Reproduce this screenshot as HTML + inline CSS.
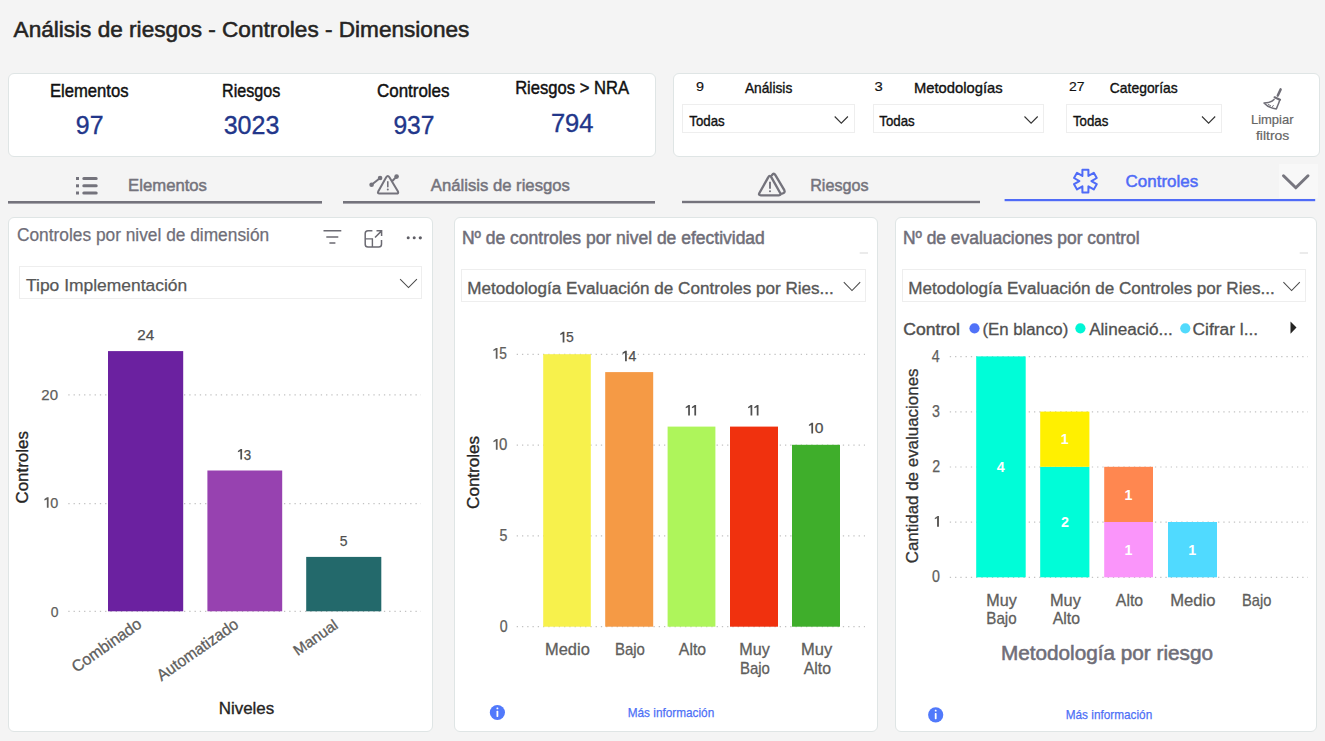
<!DOCTYPE html><html><head><meta charset="utf-8"><style>html,body{margin:0;padding:0;background:#f4f4f4;width:1325px;height:741px;overflow:hidden}svg{display:block;font-family:"Liberation Sans",sans-serif}</style></head><body><svg width="1325" height="741" viewBox="0 0 1325 741"><text x="13.58" y="36.70" font-size="22.80" font-weight="normal" fill="#252423" stroke="#252423" stroke-width="0.55" textLength="455.77" lengthAdjust="spacingAndGlyphs">Análisis de riesgos - Controles - Dimensiones</text>
<rect x="8.5" y="73.5" width="647" height="83" rx="5.5" ry="5.5" fill="#fff" stroke="#dfe5e5" stroke-width="1"/>
<text x="49.95" y="96.90" font-size="18.10" font-weight="normal" fill="#111111" stroke="#111111" stroke-width="0.45" textLength="78.59" lengthAdjust="spacingAndGlyphs">Elementos</text>
<text x="222.09" y="96.90" font-size="18.10" font-weight="normal" fill="#111111" stroke="#111111" stroke-width="0.45" textLength="58.22" lengthAdjust="spacingAndGlyphs">Riesgos</text>
<text x="377.01" y="96.90" font-size="18.10" font-weight="normal" fill="#111111" stroke="#111111" stroke-width="0.45" textLength="72.50" lengthAdjust="spacingAndGlyphs">Controles</text>
<text x="515.15" y="93.90" font-size="18.10" font-weight="normal" fill="#111111" stroke="#111111" stroke-width="0.45" textLength="113.85" lengthAdjust="spacingAndGlyphs">Riesgos &gt; NRA</text>
<text x="75.87" y="133.90" font-size="25.40" font-weight="normal" fill="#22368a" stroke="#22368a" stroke-width="0.35" textLength="27.65" lengthAdjust="spacingAndGlyphs">97</text>
<text x="223.69" y="133.90" font-size="25.40" font-weight="normal" fill="#22368a" stroke="#22368a" stroke-width="0.35" textLength="55.70" lengthAdjust="spacingAndGlyphs">3023</text>
<text x="393.38" y="133.90" font-size="25.40" font-weight="normal" fill="#22368a" stroke="#22368a" stroke-width="0.35" textLength="41.12" lengthAdjust="spacingAndGlyphs">937</text>
<text x="550.92" y="131.80" font-size="25.40" font-weight="normal" fill="#22368a" stroke="#22368a" stroke-width="0.35" textLength="42.63" lengthAdjust="spacingAndGlyphs">794</text>
<rect x="673.5" y="73.5" width="646" height="83" rx="5.5" ry="5.5" fill="#fff" stroke="#dfe5e5" stroke-width="1"/>
<text x="695.98" y="90.80" font-size="13.00" font-weight="normal" fill="#111111" stroke="#111111" stroke-width="0.15" textLength="8.01" lengthAdjust="spacingAndGlyphs">9</text>
<text x="744.88" y="93.10" font-size="14.20" font-weight="normal" fill="#111111" stroke="#111111" stroke-width="0.35" textLength="47.41" lengthAdjust="spacingAndGlyphs">Análisis</text>
<text x="874.50" y="90.80" font-size="13.00" font-weight="normal" fill="#111111" stroke="#111111" stroke-width="0.15" textLength="8.27" lengthAdjust="spacingAndGlyphs">3</text>
<text x="914.01" y="93.10" font-size="14.20" font-weight="normal" fill="#111111" stroke="#111111" stroke-width="0.35" textLength="88.60" lengthAdjust="spacingAndGlyphs">Metodologías</text>
<text x="1069.00" y="90.80" font-size="13.00" font-weight="normal" fill="#111111" stroke="#111111" stroke-width="0.15" textLength="15.55" lengthAdjust="spacingAndGlyphs">27</text>
<text x="1109.84" y="93.10" font-size="14.20" font-weight="normal" fill="#111111" stroke="#111111" stroke-width="0.35" textLength="67.93" lengthAdjust="spacingAndGlyphs">Categorías</text>
<rect x="682.5" y="104.5" width="172" height="28" fill="#fff" stroke="#eeeeee" stroke-width="1"/>
<text x="689.24" y="125.60" font-size="13.90" font-weight="normal" fill="#111111" stroke="#111111" stroke-width="0.35" textLength="35.47" lengthAdjust="spacingAndGlyphs">Todas</text>
<path d="M834.7 116.5 L841.3 123.2 L847.9 116.5" fill="none" stroke="#333" stroke-width="1.1"/>
<rect x="873.5" y="104.5" width="170" height="28" fill="#fff" stroke="#eeeeee" stroke-width="1"/>
<text x="879.24" y="125.60" font-size="13.90" font-weight="normal" fill="#111111" stroke="#111111" stroke-width="0.35" textLength="35.47" lengthAdjust="spacingAndGlyphs">Todas</text>
<path d="M1024.5 116.5 L1031.1 123.2 L1037.7 116.5" fill="none" stroke="#333" stroke-width="1.1"/>
<rect x="1066.5" y="104.5" width="155" height="28" fill="#fff" stroke="#eeeeee" stroke-width="1"/>
<text x="1072.94" y="125.60" font-size="13.90" font-weight="normal" fill="#111111" stroke="#111111" stroke-width="0.35" textLength="35.47" lengthAdjust="spacingAndGlyphs">Todas</text>
<path d="M1202.0 116.5 L1208.6 123.2 L1215.2 116.5" fill="none" stroke="#333" stroke-width="1.1"/>
<g fill="none" stroke="#6f6e77" stroke-linecap="round" stroke-linejoin="round">
<path d="M1280.6 89.4 L1277.8 95.6" stroke-width="2.5"/>
<path d="M1274.6 97.3 L1280.0 99.7" stroke-width="2.2"/>
<path d="M1274.0 99.4 C1272.0 101.6 1267.6 102.9 1264.0 102.9 C1266.6 105.9 1271.8 108.3 1276.3 108.9 C1277.7 105.6 1279.0 102.7 1279.5 100.8" stroke-width="1.5"/>
<path d="M1268.2 104.4 L1270.6 105.6 M1272.4 106.8 L1273.4 105.4" stroke-width="0.9"/>
</g>
<text x="1250.92" y="123.90" font-size="13.20" font-weight="normal" fill="#656565" stroke="#656565" stroke-width="0.2" textLength="42.67" lengthAdjust="spacingAndGlyphs">Limpiar</text>
<text x="1255.97" y="139.70" font-size="13.20" font-weight="normal" fill="#656565" stroke="#656565" stroke-width="0.2" textLength="33.29" lengthAdjust="spacingAndGlyphs">filtros</text>
<rect x="8" y="201" width="314" height="2.6" fill="#74737c"/>
<rect x="343" y="201" width="312" height="2.6" fill="#74737c"/>
<rect x="682" y="200.8" width="298" height="2.4" fill="#74737c"/>
<rect x="1279" y="164" width="39" height="34" fill="#f8f8f8"/>
<rect x="1004.6" y="199" width="310.6" height="2.2" fill="#4f6bf7"/>
<path d="M1283.5 175.8 L1295.8 187.8 L1308 175.8" fill="none" stroke="#77767f" stroke-width="3" stroke-linecap="round" stroke-linejoin="round"/>
<g fill="#74737c"><rect x="76" y="177" width="3" height="3"/><rect x="76" y="184.3" width="3" height="3"/><rect x="76" y="191.5" width="3" height="3"/></g>
<g stroke="#74737c" stroke-width="3" stroke-linecap="round"><path d="M83.8 178.5 H96.2 M83.8 185.8 H96.2 M83.8 193 H96.2"/></g>
<text x="128.11" y="190.70" font-size="17.10" font-weight="normal" fill="#74737c" stroke="#74737c" stroke-width="0.5" textLength="78.86" lengthAdjust="spacingAndGlyphs">Elementos</text>
<g fill="none" stroke="#74737c" stroke-width="2" stroke-linecap="round" stroke-linejoin="round">
<path d="M371.6 184.7 L380.1 178"/><path d="M392.8 180.5 L396.6 176.6"/>
<path d="M386.2 177.2 Q387.8 174.6 389.4 177.2 L398 191.6 Q398.8 193.6 396.6 193.6 L379.4 193.6 Q377.2 193.6 378.2 191.6 Z"/>
<path d="M387.8 181.8 L387.8 186.8" stroke-width="1.6"/>
</g><g fill="#74737c"><circle cx="371.6" cy="184.7" r="2.3"/><circle cx="380.1" cy="178" r="2.3"/><circle cx="396.6" cy="176.6" r="2.3"/><circle cx="387.8" cy="189.6" r="1"/></g>
<text x="430.85" y="191.00" font-size="17.10" font-weight="normal" fill="#74737c" stroke="#74737c" stroke-width="0.5" textLength="139.01" lengthAdjust="spacingAndGlyphs">Análisis de riesgos</text>
<g fill="none" stroke="#74737c" stroke-width="2.35" stroke-linecap="round" stroke-linejoin="round">
<path d="M768.2 177.4 Q769.8 174.4 771.4 177.4 L780.2 193.0 Q781.4 195.3 778.8 195.3 L760.8 195.3 Q758.2 195.3 759.4 193.0 Z"/>
<path d="M772.0 175.2 Q773.7 172.4 775.4 175.2 L784.3 190.2 Q785.6 192.7 782.0 193.6"/>
<path d="M770.0 181.8 L770.0 188.8" stroke-width="1.9" stroke-linecap="butt"/>
</g><circle cx="770.0" cy="191.2" r="1.05" fill="#74737c"/>
<text x="810.15" y="191.00" font-size="17.10" font-weight="normal" fill="#74737c" stroke="#74737c" stroke-width="0.5" textLength="58.38" lengthAdjust="spacingAndGlyphs">Riesgos</text>
<path d="M1082.40 169.70 L1088.40 169.70 L1088.40 175.90 L1093.77 172.80 L1096.77 178.00 L1091.40 181.10 L1096.77 184.20 L1093.77 189.40 L1088.40 186.30 L1088.40 192.50 L1082.40 192.50 L1082.40 186.30 L1077.03 189.40 L1074.03 184.20 L1079.40 181.10 L1074.03 178.00 L1077.03 172.80 L1082.40 175.90 L1082.40 169.70 Z" fill="none" stroke="#4f6bf7" stroke-width="2" stroke-linejoin="round"/>
<text x="1125.58" y="187.40" font-size="17.10" font-weight="normal" fill="#4f6bf7" stroke="#4f6bf7" stroke-width="0.5" textLength="72.70" lengthAdjust="spacingAndGlyphs">Controles</text>
<rect x="8.5" y="217.5" width="424" height="514" rx="5.5" ry="5.5" fill="#fff" stroke="#dfe5e5" stroke-width="1"/>
<text x="16.96" y="240.80" font-size="17.50" font-weight="normal" fill="#6f6e78" stroke="#6f6e78" stroke-width="0.25" textLength="252.21" lengthAdjust="spacingAndGlyphs">Controles por nivel de dimensión</text>
<g stroke="#6b6a72" stroke-width="1.5" fill="none" stroke-linecap="butt"><path d="M323.5 230.8 H341.3 M326.3 237 H338.3 M329.4 243.1 H335.4"/><path d="M372.4 230.8 H368 Q365.2 230.8 365.2 233.6 V244.3 Q365.2 247.1 368 247.1 H378.7 Q381.5 247.1 381.5 244.3 V239.9"/><path d="M365.2 238.9 H372.4 V247.1" stroke-width="1.4"/><path d="M375 237.5 L381.6 230.9 M376.5 230.8 H381.6 V235.9"/></g>
<g fill="#5f5e66"><circle cx="408.2" cy="237.8" r="1.5"/><circle cx="414.2" cy="237.8" r="1.5"/><circle cx="420.3" cy="237.8" r="1.6"/></g>
<rect x="19.5" y="266.5" width="402" height="32" fill="#fff" stroke="#eeeeee" stroke-width="1"/>
<path d="M400.1 279.2 L408.5 287.5 L416.9 279.2" fill="none" stroke="#4a4a4a" stroke-width="1.05"/>
<text x="26.05" y="290.90" font-size="17.30" font-weight="normal" fill="#575757" stroke="#575757" stroke-width="0.25" textLength="161.24" lengthAdjust="spacingAndGlyphs">Tipo Implementación</text>
<line x1="68.3" y1="394.9" x2="421" y2="394.9" stroke="#c2c2c2" stroke-width="1.2" stroke-dasharray="1.3 3.96"/>
<line x1="68.3" y1="503.6" x2="421" y2="503.6" stroke="#c2c2c2" stroke-width="1.2" stroke-dasharray="1.3 3.96"/>
<line x1="68.3" y1="611.3" x2="421" y2="611.3" stroke="#c2c2c2" stroke-width="1.2" stroke-dasharray="1.3 3.96"/>
<rect x="108.00" y="351.10" width="75.20" height="260.20" fill="#6b21a0"/>
<rect x="207.40" y="470.50" width="74.80" height="140.80" fill="#9742b0"/>
<rect x="306.20" y="556.90" width="75.10" height="54.40" fill="#23696b"/>
<text x="137.19" y="340.00" font-size="15.50" font-weight="normal" fill="#505050" stroke="#505050" stroke-width="0.25" textLength="16.95" lengthAdjust="spacingAndGlyphs">24</text>
<polygon points="242.10,459.60 242.10,449.00 240.60,449.00 237.90,450.90 237.90,452.20 240.35,451.20 240.35,459.60" fill="#505050"/>
<text x="243.79" y="459.60" font-size="15.50" font-weight="normal" fill="#505050" stroke="#505050" stroke-width="0.25" textLength="7.42" lengthAdjust="spacingAndGlyphs">3</text>
<text x="339.66" y="546.30" font-size="15.50" font-weight="normal" fill="#505050" stroke="#505050" stroke-width="0.25" textLength="7.77" lengthAdjust="spacingAndGlyphs">5</text>
<text x="41.30" y="399.80" font-size="15.50" font-weight="normal" fill="#605e5c" stroke="#605e5c" stroke-width="0.25" textLength="16.67" lengthAdjust="spacingAndGlyphs">20</text>
<polygon points="48.60,507.80 48.60,497.20 47.10,497.20 44.40,499.10 44.40,500.40 46.85,499.40 46.85,507.80" fill="#605e5c"/>
<text x="50.14" y="507.80" font-size="15.50" font-weight="normal" fill="#605e5c" stroke="#605e5c" stroke-width="0.25" textLength="8.01" lengthAdjust="spacingAndGlyphs">0</text>
<text x="50.67" y="616.60" font-size="15.50" font-weight="normal" fill="#605e5c" stroke="#605e5c" stroke-width="0.25" textLength="7.76" lengthAdjust="spacingAndGlyphs">0</text>
<text transform="translate(22.10,467.20) rotate(-90)" x="-36.29" y="5.93" font-size="16.60" font-weight="normal" fill="#252423" stroke="#252423" stroke-width="0.35" textLength="72.35" lengthAdjust="spacingAndGlyphs">Controles</text>
<text transform="translate(106.30,645.00) rotate(-35)" x="-40.58" y="5.79" font-size="16.20" font-weight="normal" fill="#605e5c" stroke="#605e5c" stroke-width="0.3" textLength="81.02" lengthAdjust="spacingAndGlyphs">Combinado</text>
<text transform="translate(197.00,649.60) rotate(-35)" x="-47.35" y="5.79" font-size="16.20" font-weight="normal" fill="#605e5c" stroke="#605e5c" stroke-width="0.3" textLength="95.29" lengthAdjust="spacingAndGlyphs">Automatizado</text>
<text transform="translate(315.40,637.20) rotate(-35)" x="-25.38" y="5.38" font-size="15.00" font-weight="normal" fill="#605e5c" stroke="#605e5c" stroke-width="0.3" textLength="50.45" lengthAdjust="spacingAndGlyphs">Manual</text>
<text x="218.70" y="713.70" font-size="16.90" font-weight="normal" fill="#252423" stroke="#252423" stroke-width="0.35" textLength="55.51" lengthAdjust="spacingAndGlyphs">Niveles</text>
<rect x="454.5" y="217.5" width="423" height="514" rx="5.5" ry="5.5" fill="#fff" stroke="#dfe5e5" stroke-width="1"/>
<text x="461.88" y="243.80" font-size="17.50" font-weight="normal" fill="#6f6e78" stroke="#6f6e78" stroke-width="0.5" textLength="302.96" lengthAdjust="spacingAndGlyphs">Nº de controles por nivel de efectividad</text>
<rect x="859.7" y="252.5" width="8.3" height="1" fill="#d8d8d8"/>
<rect x="461.5" y="269.5" width="404" height="32" fill="#fff" stroke="#eeeeee" stroke-width="1"/>
<path d="M843.8 282.2 L852.0 290.5 L860.2 282.2" fill="none" stroke="#4a4a4a" stroke-width="1.05"/>
<text x="467.31" y="294.40" font-size="17.30" font-weight="normal" fill="#575757" stroke="#575757" stroke-width="0.35" textLength="366.50" lengthAdjust="spacingAndGlyphs">Metodología Evaluación de Controles por Ries...</text>
<line x1="516.7" y1="354.4" x2="865" y2="354.4" stroke="#c2c2c2" stroke-width="1.2" stroke-dasharray="1.3 3.96"/>
<line x1="516.7" y1="445.1" x2="865" y2="445.1" stroke="#c2c2c2" stroke-width="1.2" stroke-dasharray="1.3 3.96"/>
<line x1="516.7" y1="535.8" x2="865" y2="535.8" stroke="#c2c2c2" stroke-width="1.2" stroke-dasharray="1.3 3.96"/>
<line x1="516.7" y1="626.7" x2="865" y2="626.7" stroke="#c2c2c2" stroke-width="1.2" stroke-dasharray="1.3 3.96"/>
<rect x="543.20" y="354.20" width="47.60" height="272.50" fill="#f7f14c"/>
<rect x="605.20" y="372.10" width="48.00" height="254.60" fill="#f59a45"/>
<rect x="667.60" y="426.60" width="47.80" height="200.10" fill="#aef55b"/>
<rect x="730.00" y="426.60" width="48.00" height="200.10" fill="#f0310e"/>
<rect x="792.00" y="444.80" width="48.00" height="181.90" fill="#3fae2b"/>
<polygon points="564.40,342.40 564.40,331.80 562.90,331.80 560.20,333.70 560.20,335.00 562.65,334.00 562.65,342.40" fill="#505050"/>
<text x="566.06" y="342.40" font-size="15.50" font-weight="normal" fill="#505050" stroke="#505050" stroke-width="0.25" textLength="7.77" lengthAdjust="spacingAndGlyphs">5</text>
<polygon points="626.80,361.30 626.80,350.70 625.30,350.70 622.60,352.60 622.60,353.90 625.05,352.90 625.05,361.30" fill="#505050"/>
<text x="628.58" y="361.30" font-size="15.50" font-weight="normal" fill="#505050" stroke="#505050" stroke-width="0.25" textLength="7.83" lengthAdjust="spacingAndGlyphs">4</text>
<polygon points="689.90,415.60 689.90,405.00 688.40,405.00 685.70,406.90 685.70,408.20 688.15,407.20 688.15,415.60" fill="#505050"/>
<polygon points="696.10,415.60 696.10,405.00 694.60,405.00 691.90,406.90 691.90,408.20 694.35,407.20 694.35,415.60" fill="#505050"/>
<polygon points="752.30,415.60 752.30,405.00 750.80,405.00 748.10,406.90 748.10,408.20 750.55,407.20 750.55,415.60" fill="#505050"/>
<polygon points="758.50,415.60 758.50,405.00 757.00,405.00 754.30,406.90 754.30,408.20 756.75,407.20 756.75,415.60" fill="#505050"/>
<polygon points="813.10,433.40 813.10,422.80 811.60,422.80 808.90,424.70 808.90,426.00 811.35,425.00 811.35,433.40" fill="#505050"/>
<text x="814.79" y="433.40" font-size="15.50" font-weight="normal" fill="#505050" stroke="#505050" stroke-width="0.25" textLength="8.71" lengthAdjust="spacingAndGlyphs">0</text>
<polygon points="497.50,358.80 497.50,347.90 496.00,347.90 493.30,349.80 493.30,351.10 495.75,350.10 495.75,358.80" fill="#605e5c"/>
<text x="499.18" y="358.80" font-size="15.80" font-weight="normal" fill="#605e5c" stroke="#605e5c" stroke-width="0.25" textLength="7.65" lengthAdjust="spacingAndGlyphs">5</text>
<polygon points="497.60,449.80 497.60,439.10 496.10,439.10 493.40,441.00 493.40,442.30 495.85,441.30 495.85,449.80" fill="#605e5c"/>
<text x="498.93" y="449.80" font-size="15.80" font-weight="normal" fill="#605e5c" stroke="#605e5c" stroke-width="0.25" textLength="8.35" lengthAdjust="spacingAndGlyphs">0</text>
<text x="499.54" y="540.90" font-size="15.80" font-weight="normal" fill="#605e5c" stroke="#605e5c" stroke-width="0.25" textLength="7.91" lengthAdjust="spacingAndGlyphs">5</text>
<text x="499.84" y="631.80" font-size="15.80" font-weight="normal" fill="#605e5c" stroke="#605e5c" stroke-width="0.25" textLength="7.91" lengthAdjust="spacingAndGlyphs">0</text>
<text transform="translate(473.20,472.30) rotate(-90)" x="-36.65" y="5.93" font-size="16.60" font-weight="normal" fill="#252423" stroke="#252423" stroke-width="0.35" textLength="73.06" lengthAdjust="spacingAndGlyphs">Controles</text>
<text x="545.02" y="654.50" font-size="17.00" font-weight="normal" fill="#605e5c" stroke="#605e5c" stroke-width="0.3" textLength="44.79" lengthAdjust="spacingAndGlyphs">Medio</text>
<text x="614.94" y="654.50" font-size="17.00" font-weight="normal" fill="#605e5c" stroke="#605e5c" stroke-width="0.3" textLength="29.99" lengthAdjust="spacingAndGlyphs">Bajo</text>
<text x="678.85" y="654.50" font-size="17.00" font-weight="normal" fill="#605e5c" stroke="#605e5c" stroke-width="0.3" textLength="27.22" lengthAdjust="spacingAndGlyphs">Alto</text>
<text x="739.34" y="654.50" font-size="17.00" font-weight="normal" fill="#605e5c" stroke="#605e5c" stroke-width="0.3" textLength="30.50" lengthAdjust="spacingAndGlyphs">Muy</text>
<text x="739.94" y="674.30" font-size="17.00" font-weight="normal" fill="#605e5c" stroke="#605e5c" stroke-width="0.3" textLength="29.99" lengthAdjust="spacingAndGlyphs">Bajo</text>
<text x="801.12" y="654.50" font-size="17.00" font-weight="normal" fill="#605e5c" stroke="#605e5c" stroke-width="0.3" textLength="31.12" lengthAdjust="spacingAndGlyphs">Muy</text>
<text x="803.65" y="674.30" font-size="17.00" font-weight="normal" fill="#605e5c" stroke="#605e5c" stroke-width="0.3" textLength="27.32" lengthAdjust="spacingAndGlyphs">Alto</text>
<circle cx="497.4" cy="712.5" r="7.6" fill="#5179fb"/>
<rect x="496.5" y="710.8" width="1.8" height="6.1" rx="0.6" fill="#fff"/><rect x="496.5" y="707.5" width="1.8" height="1.8" rx="0.6" fill="#fff"/>
<text x="627.75" y="717.30" font-size="13.60" font-weight="normal" fill="#4d6ff6" stroke="#4d6ff6" stroke-width="0.25" textLength="86.44" lengthAdjust="spacingAndGlyphs">Más información</text>
<rect x="895.5" y="217.5" width="421" height="514" rx="5.5" ry="5.5" fill="#fff" stroke="#dfe5e5" stroke-width="1"/>
<text x="902.88" y="243.80" font-size="17.50" font-weight="normal" fill="#6f6e78" stroke="#6f6e78" stroke-width="0.5" textLength="236.73" lengthAdjust="spacingAndGlyphs">Nº de evaluaciones por control</text>
<rect x="1299.7" y="252.5" width="8.3" height="1" fill="#d8d8d8"/>
<rect x="902.5" y="269.5" width="403" height="32" fill="#fff" stroke="#eeeeee" stroke-width="1"/>
<path d="M1283.4 282.2 L1291.6 290.5 L1299.8 282.2" fill="none" stroke="#4a4a4a" stroke-width="1.05"/>
<text x="908.21" y="294.40" font-size="17.30" font-weight="normal" fill="#575757" stroke="#575757" stroke-width="0.35" textLength="366.50" lengthAdjust="spacingAndGlyphs">Metodología Evaluación de Controles por Ries...</text>
<text x="903.33" y="334.80" font-size="17.30" font-weight="normal" fill="#505050" stroke="#505050" stroke-width="0.45" textLength="56.67" lengthAdjust="spacingAndGlyphs">Control</text>
<circle cx="974.5" cy="328.3" r="5.1" fill="#5072f8"/>
<text x="982.38" y="334.80" font-size="17.30" font-weight="normal" fill="#505050" stroke="#505050" stroke-width="0.3" textLength="85.91" lengthAdjust="spacingAndGlyphs">(En blanco)</text>
<circle cx="1080.4" cy="328.3" r="5.1" fill="#00f6d6"/>
<text x="1089.15" y="334.80" font-size="17.30" font-weight="normal" fill="#505050" stroke="#505050" stroke-width="0.3" textLength="83.69" lengthAdjust="spacingAndGlyphs">Alineació...</text>
<circle cx="1185.3" cy="328.3" r="5.1" fill="#52dafc"/>
<text x="1192.57" y="334.80" font-size="17.30" font-weight="normal" fill="#505050" stroke="#505050" stroke-width="0.3" textLength="65.64" lengthAdjust="spacingAndGlyphs">Cifrar l...</text>
<path d="M1290.5 321.5 L1296.5 327.6 L1290.5 333.7 Z" fill="#252423"/>
<line x1="949.8" y1="356.6" x2="1308" y2="356.6" stroke="#c2c2c2" stroke-width="1.2" stroke-dasharray="1.3 3.96"/>
<line x1="949.8" y1="411.8" x2="1308" y2="411.8" stroke="#c2c2c2" stroke-width="1.2" stroke-dasharray="1.3 3.96"/>
<line x1="949.8" y1="467.0" x2="1308" y2="467.0" stroke="#c2c2c2" stroke-width="1.2" stroke-dasharray="1.3 3.96"/>
<line x1="949.8" y1="522.2" x2="1308" y2="522.2" stroke="#c2c2c2" stroke-width="1.2" stroke-dasharray="1.3 3.96"/>
<line x1="949.8" y1="577.3" x2="1308" y2="577.3" stroke="#c2c2c2" stroke-width="1.2" stroke-dasharray="1.3 3.96"/>
<rect x="976.20" y="356.40" width="49.50" height="220.90" fill="#00fdd8"/>
<rect x="1040.20" y="466.80" width="49.20" height="110.50" fill="#00fdd8"/>
<rect x="1040.20" y="411.60" width="49.20" height="55.20" fill="#fff000"/>
<rect x="1104.20" y="522.00" width="48.80" height="55.30" fill="#fa95fa"/>
<rect x="1104.20" y="466.80" width="48.80" height="55.20" fill="#ff8750"/>
<rect x="1168.00" y="522.00" width="49.00" height="55.30" fill="#50daff"/>
<text x="931.81" y="361.70" font-size="15.80" font-weight="normal" fill="#605e5c" stroke="#605e5c" stroke-width="0.25" textLength="7.91" lengthAdjust="spacingAndGlyphs">4</text>
<text x="932.04" y="416.90" font-size="15.80" font-weight="normal" fill="#605e5c" stroke="#605e5c" stroke-width="0.25" textLength="7.91" lengthAdjust="spacingAndGlyphs">3</text>
<text x="932.15" y="472.10" font-size="15.80" font-weight="normal" fill="#605e5c" stroke="#605e5c" stroke-width="0.25" textLength="7.91" lengthAdjust="spacingAndGlyphs">2</text>
<text x="932.04" y="582.40" font-size="15.80" font-weight="normal" fill="#605e5c" stroke="#605e5c" stroke-width="0.25" textLength="7.91" lengthAdjust="spacingAndGlyphs">0</text>
<polygon points="939.00,526.80 939.00,516.00 937.50,516.00 934.80,517.90 934.80,519.20 937.00,518.20 937.00,526.80" fill="#605e5c"/>
<text x="996.86" y="472.20" font-size="15.00" font-weight="bold" fill="#ffffff" textLength="7.92" lengthAdjust="spacingAndGlyphs">4</text>
<text x="1060.78" y="443.90" font-size="15.00" font-weight="bold" fill="#ffffff" textLength="7.92" lengthAdjust="spacingAndGlyphs">1</text>
<text x="1060.88" y="527.00" font-size="15.00" font-weight="bold" fill="#ffffff" textLength="7.92" lengthAdjust="spacingAndGlyphs">2</text>
<text x="1124.48" y="500.30" font-size="15.00" font-weight="bold" fill="#ffffff" textLength="7.92" lengthAdjust="spacingAndGlyphs">1</text>
<text x="1124.48" y="555.30" font-size="15.00" font-weight="bold" fill="#ffffff" textLength="7.92" lengthAdjust="spacingAndGlyphs">1</text>
<text x="1188.28" y="555.30" font-size="15.00" font-weight="bold" fill="#ffffff" textLength="7.92" lengthAdjust="spacingAndGlyphs">1</text>
<text transform="translate(912.50,465.80) rotate(-90)" x="-97.51" y="5.93" font-size="16.60" font-weight="normal" fill="#333333" stroke="#333333" stroke-width="0.3" textLength="194.85" lengthAdjust="spacingAndGlyphs">Cantidad de evaluaciones</text>
<text x="986.24" y="605.70" font-size="17.00" font-weight="normal" fill="#605e5c" stroke="#605e5c" stroke-width="0.3" textLength="30.50" lengthAdjust="spacingAndGlyphs">Muy</text>
<text x="986.33" y="624.00" font-size="17.00" font-weight="normal" fill="#605e5c" stroke="#605e5c" stroke-width="0.3" textLength="30.31" lengthAdjust="spacingAndGlyphs">Bajo</text>
<text x="1050.03" y="605.70" font-size="17.00" font-weight="normal" fill="#605e5c" stroke="#605e5c" stroke-width="0.3" textLength="30.81" lengthAdjust="spacingAndGlyphs">Muy</text>
<text x="1052.65" y="624.00" font-size="17.00" font-weight="normal" fill="#605e5c" stroke="#605e5c" stroke-width="0.3" textLength="27.32" lengthAdjust="spacingAndGlyphs">Alto</text>
<text x="1115.85" y="605.70" font-size="17.00" font-weight="normal" fill="#605e5c" stroke="#605e5c" stroke-width="0.3" textLength="27.22" lengthAdjust="spacingAndGlyphs">Alto</text>
<text x="1170.31" y="605.70" font-size="17.00" font-weight="normal" fill="#605e5c" stroke="#605e5c" stroke-width="0.3" textLength="45.21" lengthAdjust="spacingAndGlyphs">Medio</text>
<text x="1241.96" y="605.70" font-size="17.00" font-weight="normal" fill="#605e5c" stroke="#605e5c" stroke-width="0.3" textLength="29.35" lengthAdjust="spacingAndGlyphs">Bajo</text>
<text x="1000.99" y="659.60" font-size="20.00" font-weight="normal" fill="#6f6e78" stroke="#6f6e78" stroke-width="0.55" textLength="211.95" lengthAdjust="spacingAndGlyphs">Metodología por riesgo</text>
<circle cx="935.7" cy="714.8" r="7.6" fill="#5179fb"/>
<rect x="934.8000000000001" y="713.0999999999999" width="1.8" height="6.1" rx="0.6" fill="#fff"/><rect x="934.8000000000001" y="709.8" width="1.8" height="1.8" rx="0.6" fill="#fff"/>
<text x="1065.75" y="719.00" font-size="13.60" font-weight="normal" fill="#4d6ff6" stroke="#4d6ff6" stroke-width="0.25" textLength="86.44" lengthAdjust="spacingAndGlyphs">Más información</text></svg></body></html>
